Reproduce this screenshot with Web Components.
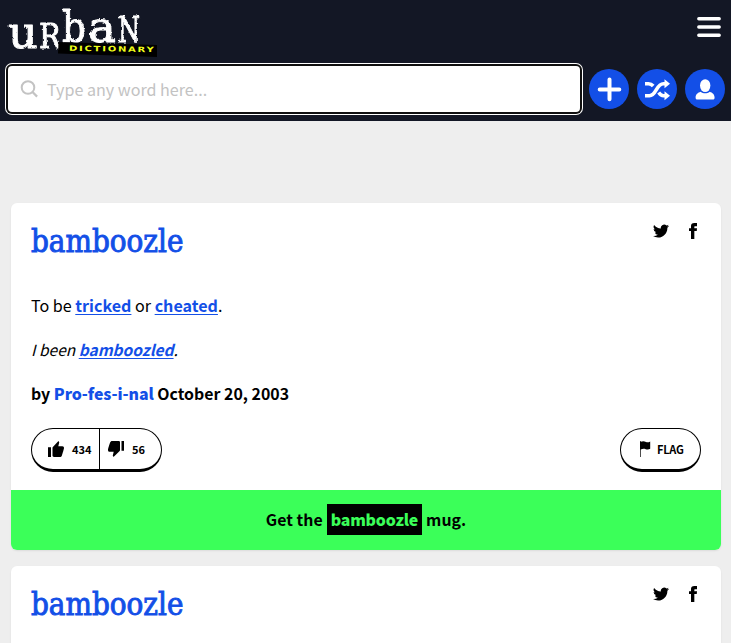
<!DOCTYPE html>
<html lang="en">
<head>
<meta charset="utf-8">
<title>Urban Dictionary: bamboozle</title>
<style>
html,body{margin:0;padding:0}
body{background:#eee;height:643px;overflow:hidden;font-family:"Noto Sans CJK SC","Noto Sans",sans-serif;font-size:16px;color:#000}
main{box-sizing:border-box;height:522px;overflow:hidden;padding:82px 10px 0 11px;display:flex;flex-direction:column;gap:16px}
</style>
</head>
<body>
<ud-header></ud-header>
<main>
  <ud-definition word="bamboozle" author="Pro-fes-i-nal" date="October 20, 2003" up="434" down="56">
    <span slot="meaning">To be <ud-link>tricked</ud-link> or <ud-link>cheated</ud-link>.</span>
    <span slot="example">I been <ud-link>bamboozled</ud-link>.</span>
  </ud-definition>
  <ud-definition word="bamboozle" style="flex:1;border-radius:6px 6px 0 0"></ud-definition>
</main>
<script>
const ICONS = {
  search: '<circle cx="8" cy="7.5" r="6.3" fill="none" stroke="currentColor" stroke-width="2"/><path d="M12.5 12l4.6 4.6" stroke="currentColor" stroke-width="2.2"/>',
  menu: '<path d="M1.8 1.8H22.2M1.8 10H22.2M1.8 18.2H22.2" stroke="currentColor" stroke-width="3.4" stroke-linecap="round"/>',
  plus: '<path d="M12.5 2.4V22.2M2.7 12.4H22.3" stroke="currentColor" stroke-width="4" stroke-linecap="round"/>',
  shuffle: '<g fill="none" stroke="currentColor" stroke-width="3.6"><path d="M0 17.7H4.5C11.5 17.7 11 5.7 18.5 5.7H21"/><path d="M0 5.7H3.5C5.6 5.7 7 6.6 8.2 8"/><path d="M13.7 14.6C15.2 16.8 16.6 17.7 18.5 17.7H21"/></g><path d="M19.5 1.2L25 5.7 19.5 10.2ZM19.5 13.2L25 17.7 19.5 22.2Z"/>',
  user: '<ellipse cx="10.2" cy="6.6" rx="5.2" ry="6.4"/><path d="M.6 18.8C.6 15.4 2.8 13.7 5.6 12.8C8.4 14.9 12 14.9 14.8 12.8C17.4 13.7 19.6 15.4 19.6 18.8C19.6 20 19 20.6 18 20.6H2.2C1.2 20.6.6 20 .6 18.8Z"/>',
  twitter: '<path d="M24 4.56a9.8 9.8 0 0 1-2.83.77 4.93 4.93 0 0 0 2.17-2.72 9.9 9.9 0 0 1-3.13 1.2 4.92 4.92 0 0 0-8.38 4.48A13.98 13.98 0 0 1 1.67 3.15 4.93 4.93 0 0 0 3.2 9.72a4.9 4.9 0 0 1-2.23-.61 4.93 4.93 0 0 0 3.95 4.89 4.9 4.9 0 0 1-2.22.08 4.93 4.93 0 0 0 4.6 3.42A9.9 9.9 0 0 1 0 19.54 13.94 13.94 0 0 0 7.55 21.75c9.14 0 14.3-7.72 13.98-14.65A10 10 0 0 0 24 4.56z"/>',
  facebook: '<path d="M9 8H6v4h3v12h5V12h3.64L18 8h-4V6.33c0-.95.2-1.33 1.12-1.33H18V0h-3.8C10.6 0 9 1.58 9 4.62z"/>',
  up: '<path d="M0 6.2H3V16H0ZM4.5 7.1C4.5 6.5 4.7 6.1 5.1 5.7L10 .5C10.5 0 11.3.8 11.2 1.6L10.3 5.2H14.4C15.5 5.2 16 6 16 7C16 8 14.5 12.8 13.9 14.4C13.5 15.5 12.8 16 11.9 16H6C5.1 16 4.5 15.5 4.5 14.6Z"/>',
  down: '<path transform="rotate(180 8 8)" d="M0 6.2H2.5V16H0ZM4 7.1C4 6.5 4.2 6.1 4.6 5.7L10 .5C10.5 0 11.3.8 11.2 1.6L10.3 5.2H14.4C15.5 5.2 16 6 16 7C16 8 14.5 12.8 13.9 14.4C13.5 15.5 12.8 16 11.9 16H5.5C4.6 16 4 15.5 4 14.6Z"/>',
  flag: '<path d="M0 0H.7V.8C3-.3 4.5.3 6 .9C7.5 1.5 8.8 1.3 10.2.4V7.8C8.8 8.8 7.2 8.7 5.7 8.2C4 7.6 2.8 7.6.7 8.6V16H0Z"/>'
};
const icon = (name, w, h, box) => `<svg width="${w}" height="${h}" viewBox="${box || `0 0 ${w} ${h}`}" fill="currentColor" aria-hidden="true">${ICONS[name]}</svg>`;

function define(tag, render) {
  customElements.define(tag, class extends HTMLElement {
    constructor() {
      super();
      this.attachShadow({mode: 'open'});
    }
    connectedCallback() {
      this.shadowRoot.innerHTML = render(this);
    }
  });
}

define('ud-link', () => `
  <style>:host{display:inline;color:#134fe7;font-weight:700;text-decoration:underline;text-decoration-thickness:1px;text-underline-offset:2px}</style>
  <slot></slot>`);

define('ud-logo', () => `
  <style>:host{display:block;width:160px;height:60px}svg{display:block}</style>
  <svg width="160" height="60" viewBox="0 0 160 60" role="img">
    <filter id="worn" x="-5%" y="-5%" width="110%" height="110%"><feTurbulence type="fractalNoise" baseFrequency=".35" numOctaves="2" seed="4"/><feDisplacementMap in="SourceGraphic" scale="2.6" xChannelSelector="R" yChannelSelector="G"/></filter>
    <g filter="url(#worn)" fill="#fff" stroke="#fff" stroke-width=".9" stroke-linejoin="round" font-family="'DejaVu Serif'">
      <text x="8" y="48" font-size="44" textLength="30" lengthAdjust="spacingAndGlyphs">u</text>
      <text x="39" y="48" font-size="33" textLength="22" lengthAdjust="spacingAndGlyphs">R</text>
      <text x="62" y="42" font-size="43" textLength="24" lengthAdjust="spacingAndGlyphs">b</text>
      <text x="88" y="41.5" font-size="43" textLength="28" lengthAdjust="spacingAndGlyphs">a</text>
      <text x="118" y="42" font-size="35" textLength="22" lengthAdjust="spacingAndGlyphs">N</text>
    </g>
    <path d="M58.5 42L157 45V57L58 53.5Z"/>
    <text transform="translate(69 50.7) rotate(1) scale(1.35 1)" font-family="'DejaVu Sans'" font-weight="700" font-size="7.4" fill="#f0ff1a" textLength="62.7" lengthAdjust="spacing">DICTIONARY</text>
  </svg>`);

define('ud-round-button', el => {
  const [w, h] = {plus: [24, 24], shuffle: [25, 23], user: [19.6, 21]}[el.getAttribute('icon')];
  return `
  <style>:host{display:flex;width:40px;height:40px;border-radius:50%;background:#134fe7;color:#fff;align-items:center;justify-content:center}svg{overflow:visible}</style>
  ${icon(el.getAttribute('icon'), w, h)}`;
});

define('ud-search', () => `
  <style>
  :host{display:flex;box-sizing:border-box;flex:1;height:46px;background:#fff;border-radius:4px;box-shadow:0 0 0 2px #101010,0 0 0 3px #fff;align-items:center;padding-left:12px;gap:9px;color:#c3c3c3}
  span{font-size:16.1px;line-height:24px}
  svg{flex:none}
  </style>
  ${icon('search', 18, 18)}<span>Type any word here...</span>`);

define('ud-header', () => `
  <style>
  :host{display:block;box-sizing:border-box;height:121px;background:#131725}
  .top{display:flex;justify-content:space-between;height:66px;padding-right:10px}
  .menu{color:#fff;padding-top:17px;line-height:0}
  .row{display:flex;align-items:center;gap:8px;padding:0 6px 0 8px;height:46px}
  </style>
  <div class="top"><ud-logo></ud-logo><div class="menu">${icon('menu', 24, 20)}</div></div>
  <div class="row"><ud-search></ud-search>
    <ud-round-button icon="plus" style="margin-left:1px"></ud-round-button><ud-round-button icon="shuffle"></ud-round-button><ud-round-button icon="user"></ud-round-button></div>`);

define('ud-pill', () => `
  <style>
  :host{display:inline-flex;box-sizing:border-box;height:44px;border:1px solid #000;border-bottom-width:3px;border-radius:22px;font-size:11px;line-height:14px;font-weight:700;overflow:hidden}
  ::slotted(div){display:flex;align-items:center;box-sizing:border-box}
  </style><slot></slot>`);

define('ud-definition', el => {
  const a = n => el.getAttribute(n);
  return `
  <style>
  :host{display:block;background:#fff;border-radius:6px;overflow:hidden;flex:none;box-shadow:0 1px 2px rgba(0,0,0,.08)}
  .body{padding:0 20px 18px}
  header{display:flex;justify-content:space-between;height:90px;padding:0 20px}
  h1{margin:20px 0 0;font:400 31px/37px "DejaVu Serif Condensed","DejaVu Serif",serif;font-stretch:condensed;-webkit-text-stroke:.9px #134fe7;color:#134fe7}
  .share{display:flex;gap:16px;padding-top:20px;height:16px}
  p{margin:0;height:24px;line-height:24px;padding-bottom:20px}
  .meaning{font-size:16.1px}
  .example{font-style:italic;font-size:15.5px}
  .by{font-weight:700;font-size:15.9px;padding:1px 0 22px}
  .by b{color:#134fe7;letter-spacing:-.08px}
  .actions{display:flex;justify-content:space-between}
  .mug{display:flex;align-items:center;justify-content:center;gap:4px;background:#3bff59;box-sizing:border-box;height:60px;padding-bottom:1px;font-weight:700;font-size:15.9px;line-height:31px}
  .mug b{background:#000;color:#3bff59;padding:0 4px;letter-spacing:-.2px}
  </style>
  <header><h1>${a('word')}</h1><div class="share">${icon('twitter', 16, 16, '0 0 24 24')}${icon('facebook', 16, 16, '0 0 24 24')}</div></header>
  ${a('author') ? `<div class="body">
    <p class="meaning"><slot name="meaning"></slot></p>
    <p class="example"><slot name="example"></slot></p>
    <p class="by">by <b>${a('author')}</b> ${a('date')}</p>
    <div class="actions">
      <ud-pill><div style="width:68px;padding-left:16px;gap:8px;border-right:1px solid #000">${icon('up', 16, 16)}${a('up')}</div><div style="width:61px;padding-left:8px;gap:8px">${icon('down', 16, 16)}${a('down')}</div></ud-pill>
      <ud-pill><div style="width:79px;padding-left:19px;gap:6px;letter-spacing:-.2px">${icon('flag', 11, 16)}FLAG</div></ud-pill>
    </div>
  </div>
  <div class="mug"><span>Get the</span><b>${a('word')}</b><span>mug.</span></div>` : ''}`;
});
</script>
</body>
</html>
